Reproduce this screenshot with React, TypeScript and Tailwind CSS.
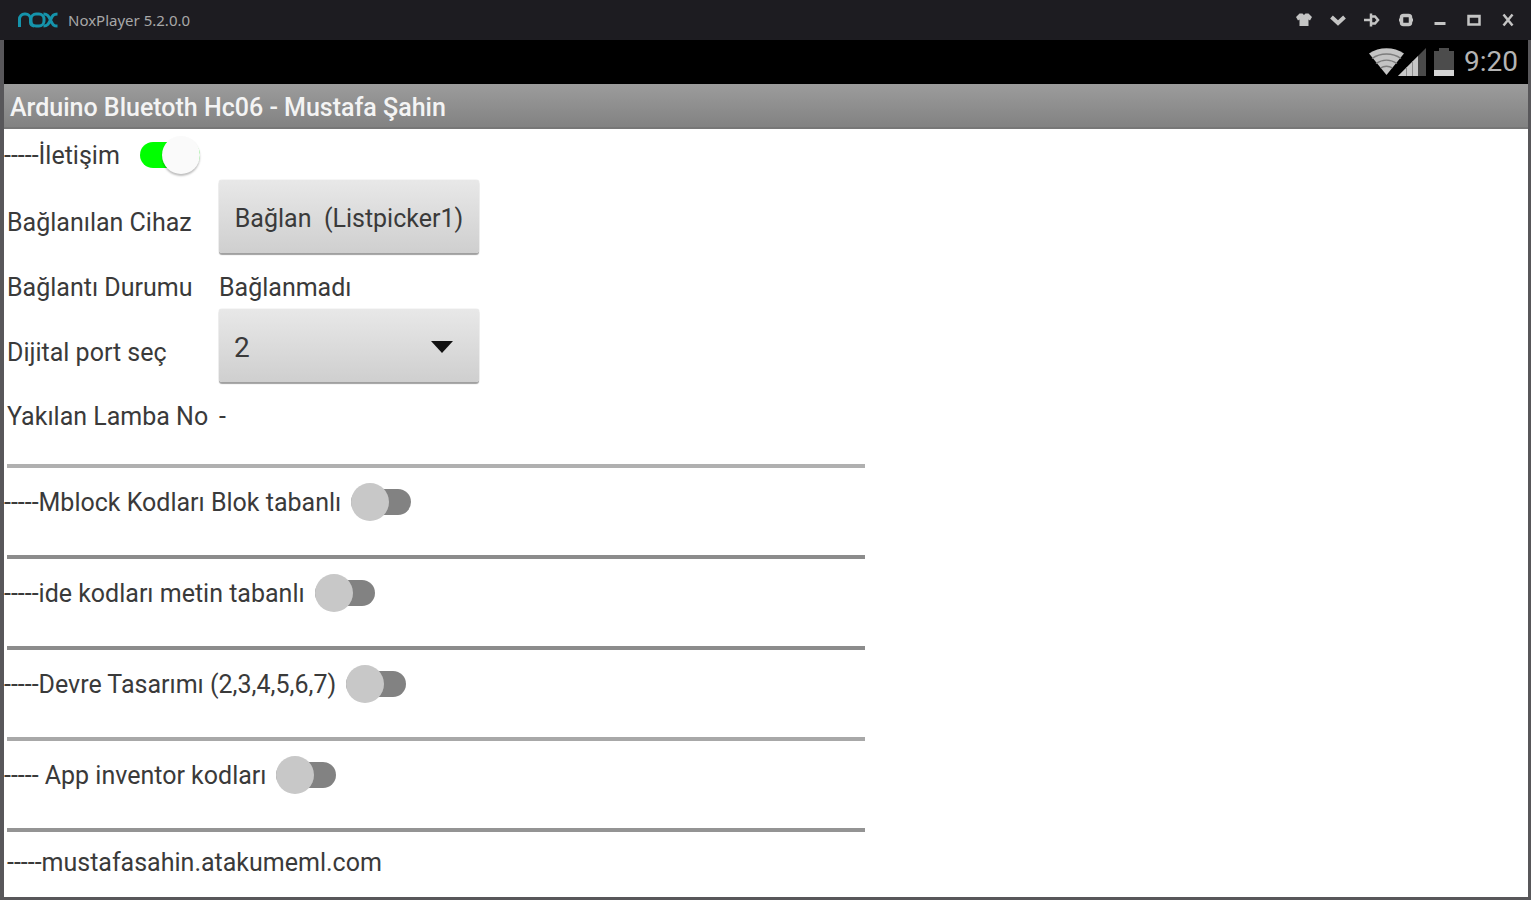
import { useState } from 'react'
import type { ReactNode } from 'react'

function NoxLogo() {
  return (
    <svg viewBox="0 0 40 16" className="h-4 w-10" fill="none" stroke="#1593ab" strokeWidth="3" role="img" aria-label="nox">
      <path d="M1.500 15V7a5 5 0 0 1 5-5h1a5 5 0 0 1 5 5v3.500a3.500 3.500 0 0 0 3.500 3.500" />
      <rect x="13" y="2" width="13" height="12" rx="5" />
      <path d="M25.500 2c4 0 5 2 7 6s2.500 6 7 6M39.500 2c-4.500 0-5 2-7 6s-3 6-7 6" />
    </svg>
  )
}

const windowButtons: { label: string; icon: ReactNode }[] = [
  {
    label: 'Tema',
    icon: <path d="M4.500 2.500h3L9 4l1.500-1.500h3L17 6l-2 3.500-1.500-1V15h-9V8.500L3 9.500 1 6z" fill="currentColor" />,
  },
  { label: 'Menü', icon: <path d="M2.500 6 9 12l6.500-6" fill="none" stroke="currentColor" strokeWidth="4" /> },
  {
    label: 'Sabitle',
    icon: <path d="M1 9h7M8 2.500v13M8 5.500h4l3 3.500-3 3.500H8" fill="none" stroke="currentColor" strokeWidth="2.500" />,
  },
  {
    label: 'Ayarlar',
    icon: (
      <>
        <rect x="4.500" y="4.500" width="9" height="9" rx="2" fill="none" stroke="currentColor" strokeWidth="3.500" />
        <path d="M2 9h2M14 9h2" stroke="currentColor" strokeWidth="3" />
      </>
    ),
  },
  { label: 'Simge durumuna küçült', icon: <path d="M3.500 12.500h11" stroke="currentColor" strokeWidth="3" /> },
  {
    label: 'Ekranı kapla',
    icon: <path d="M3.500 5h11v8.500h-11zM3.500 5.500h11" fill="none" stroke="currentColor" strokeWidth="2.500" />,
  },
  { label: 'Kapat', icon: <path d="M4.500 3.500l9 11M13.500 3.500l-9 11" stroke="currentColor" strokeWidth="2.500" /> },
]

function WindowBar() {
  return (
    <header className="flex h-10 items-center justify-between bg-[#1d1c21] pr-[14px] pl-[18px]">
      <div className="flex items-center gap-[10px]">
        <NoxLogo />
        <span className="font-['Noto_Sans',sans-serif] text-[15px] leading-4 text-[#a8a8a8]">NoxPlayer 5.2.0.0</span>
      </div>
      <div className="flex gap-4 text-[#c4c4c4]">
        {windowButtons.map((b) => (
          <button key={b.label} type="button" aria-label={b.label}>
            <svg viewBox="0 0 18 18" className="block h-[18px] w-[18px]">
              {b.icon}
            </svg>
          </button>
        ))}
      </div>
    </header>
  )
}

function StatusBar() {
  return (
    <div className="flex h-11 items-center justify-end bg-black pr-[10px]">
      <svg viewBox="0 0 36 28" className="h-7 w-9">
        <path d="M1 5.500C11-1.500 26-1.500 36 5.500L18.500 27z" fill="#c4c4c4" />
        <path
          d="M4 10.500c8.500-6 20.500-6 29 0M8 15.500c6.500-4.500 14.500-4.500 21 0M12.500 20c3.500-2.500 8.500-2.500 12 0"
          fill="none"
          stroke="#7d7d7d"
          strokeWidth="1.500"
        />
      </svg>
      <svg viewBox="0 0 28 28" className="-ml-[6px] h-7 w-7">
        <path d="M28 0v28H0z" fill="#4a4a4a" />
        <path d="M20 8v20H0z" fill="#c8c8c8" />
        <path d="M8.500 19v9M14.500 13v15" stroke="#8d8d8d" strokeWidth="1" />
      </svg>
      <svg viewBox="0 0 20 28" className="ml-2 h-7 w-5">
        <path d="M0 3h5V0h10v3h5v25H0z" fill="#4c4c4c" />
        <path d="M0 22h20v6H0z" fill="#d4d4d4" />
      </svg>
      <span className="ml-[10px] text-[28px] leading-9 text-[#b4b4b4]">9:20</span>
    </div>
  )
}

function Switch({ label, defaultOn = false, gap = 'gap-[10px]' }: { label: string; defaultOn?: boolean; gap?: string }) {
  const [on, setOn] = useState(defaultOn)
  return (
    <label className={`flex w-fit cursor-pointer items-center ${gap}`}>
      <span className="pt-[2px] whitespace-pre">{label}</span>
      <input type="checkbox" role="switch" className="sr-only" checked={on} onChange={(e) => setOn(e.target.checked)} />
      <span
        className={`flex h-[26px] w-[60px] shrink-0 items-center rounded-full ${
          on ? 'justify-end bg-[#00ff00]' : 'justify-start bg-[#828282]'
        }`}
      >
        <span
          className={`h-[38px] w-[38px] shrink-0 rounded-full ${
            on ? 'bg-[#fafafa] shadow-[0_2px_2px_rgba(0,0,0,0.25)]' : 'bg-[#c8c8c8]'
          }`}
        />
      </span>
    </label>
  )
}

const sections = [
  { label: '-----Mblock Kodları Blok tabanlı', line: 'border-[#b0b0b0]' },
  { label: '-----ide kodları metin tabanlı', line: 'border-[#8c8c8c]' },
  { label: '-----Devre Tasarımı (2,3,4,5,6,7)', line: 'border-[#8c8c8c]' },
  { label: '----- App inventor kodları', line: 'border-[#a8a8a8]' },
]

const divider = 'ml-[3px] w-[56.3%] border-t-4'

const raised =
  'h-[73px] w-full rounded-[3px] bg-linear-to-b from-[#e8e8e8] to-[#cfcfcf] shadow-[0_2px_1px_#a0a0a0,0_0_1px_#a0a0a0] px-[15px] pt-1'

export default function App() {
  const [port, setPort] = useState('2')

  return (
    <div className="flex min-h-screen flex-col bg-[#1d1c21] font-[Roboto,sans-serif] text-[25px] leading-8 text-[#3a3a3a]">
      <WindowBar />
      <div className="flex grow flex-col border-r-3 border-b-3 border-l-4 border-[#58575a]">
        <StatusBar />
        <h1 className="h-[45px] border-b-2 border-[#777] bg-linear-to-b from-[#9c9c9c] to-[#828282] px-[6px] pt-2 font-medium text-[#f4f4f4]">
          Arduino Bluetoth Hc06 - Mustafa Şahin
        </h1>
        <main className="grow bg-white">
          <div className="flex h-[51px] items-center">
            <Switch label="-----İletişim" defaultOn gap="gap-5" />
          </div>
          <div className="grid grid-cols-[212px_260px] grid-rows-[86px_43px_88px_40px] items-center pl-[3px]">
            <span>Bağlanılan Cihaz</span>
            <button type="button" className={`self-start whitespace-pre ${raised}`}>
              Bağlan  (Listpicker1)
            </button>
            <span>Bağlantı Durumu</span>
            <span>Bağlanmadı</span>
            <label htmlFor="port">Dijital port seç</label>
            <div className="relative self-start">
              <select
                id="port"
                value={port}
                onChange={(e) => setPort(e.target.value)}
                className={`block appearance-none text-[28px] ${raised}`}
              >
                {['2', '3', '4', '5', '6', '7'].map((p) => (
                  <option key={p}>{p}</option>
                ))}
              </select>
              <svg viewBox="0 0 22 12" className="pointer-events-none absolute top-8 right-[26px] h-3 w-[22px]">
                <path d="M0 0h22L11 12z" fill="#111" />
              </svg>
            </div>
            <span>Yakılan Lamba No</span>
            <span>-</span>
          </div>
          <div className="pt-[27px]">
            {sections.map((s) => (
              <section key={s.label} className="h-[91px]">
                <hr className={`${divider} ${s.line}`} />
                <div className="flex h-[68px] items-center">
                  <Switch label={s.label} />
                </div>
              </section>
            ))}
            <hr className={`${divider} border-[#949494]`} />
          </div>
          <footer className="pt-[15px] pl-[3px]">-----mustafasahin.atakumeml.com</footer>
        </main>
      </div>
    </div>
  )
}
